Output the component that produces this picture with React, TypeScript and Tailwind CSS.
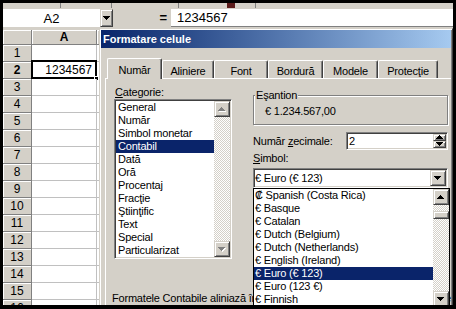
import React from 'react';

const raised =
  'bg-[#d4d0c8] border border-t-[#d4d0c8] border-l-[#d4d0c8] border-r-[#404040] border-b-[#404040] shadow-[inset_1px_1px_0_#fff,inset_-1px_-1px_0_#808080]';
const sunken =
  'bg-white border border-t-[#808080] border-l-[#808080] border-r-white border-b-white shadow-[inset_1px_1px_0_#404040,inset_-1px_-1px_0_#d4d0c8]';
const checker =
  'bg-[image:conic-gradient(#d4d0c8_25%,#fff_0_50%,#d4d0c8_0_75%,#fff_0)] bg-[length:2px_2px]';

const categories = [
  'General',
  'Număr',
  'Simbol monetar',
  'Contabil',
  'Dată',
  'Oră',
  'Procentaj',
  'Fracţie',
  'Ştiinţific',
  'Text',
  'Special',
  'Particularizat',
];

const symbols = [
  '₡ Spanish (Costa Rica)',
  '€ Basque',
  '€ Catalan',
  '€ Dutch (Belgium)',
  '€ Dutch (Netherlands)',
  '€ English (Ireland)',
  '€ Euro (€ 123)',
  '€ Euro (123 €)',
  '€ Finnish',
];

const tabs = [
  { label: 'Număr', w: 'w-[55px]' },
  { label: 'Aliniere', w: 'w-[52px]' },
  { label: 'Font', w: 'w-[54px]' },
  { label: 'Bordură', w: 'w-[55px]' },
  { label: 'Modele', w: 'w-[55px]' },
  { label: 'Protecţie', w: 'w-[60px]' },
];

// pixel triangle like the classic windows scroll arrows
function Arrow({ up = false, disabled = false }: { up?: boolean; disabled?: boolean }) {
  const rows = up ? [3, 2, 1, 0] : [0, 1, 2, 3];
  const tri = (dx: number, dy: number, fill: string) =>
    rows.map((inset, i) => (
      <rect key={fill + i} x={inset + dx} y={i + dy} width={7 - inset * 2} height={1} fill={fill} />
    ));
  return (
    <svg width="8" height="5" viewBox="0 0 8 5" shapeRendering="crispEdges">
      {disabled && tri(1, 1, '#ffffff')}
      {tri(0, 0, disabled ? '#808080' : '#000000')}
    </svg>
  );
}

function Sheet() {
  const rows = Array.from({ length: 16 }, (_, i) => i + 1);
  return (
    <div className="flex flex-col">
      {/* toolbar remnant */}
      <div className="h-[5px] flex">
        <div className="w-[57px]" />
        <div className="w-px bg-[#808080]" />
        <div className="w-[50px]" />
        <div className="w-px bg-[#808080]" />
        <div className="w-[66px]" />
        <div className="w-px bg-[#808080]" />
        <div className="w-[48px]" />
        <div className="w-[8px] bg-[#5a1a1a]" />
        <div className="w-[20px]" />
        <div className="w-px bg-[#808080]" />
      </div>

      {/* formula bar */}
      <div className="h-[22px] flex items-start pt-px">
        <div className="w-[97px] h-[18px] bg-white flex items-center justify-center text-[13px] leading-none">
          A2
        </div>
        <div className={`w-[13px] h-[18px] ${raised} flex items-center justify-center`}>
          <Arrow />
        </div>
        <div className="w-[58px] h-[18px] flex items-center justify-end pr-[4px] text-[13px] font-bold">
          =
        </div>
        <div className="flex-1 h-[18px] bg-white border-b border-[#808080] pl-[6px] flex items-center text-[13px] leading-none">
          1234567
        </div>
      </div>

      {/* column header */}
      <div className="h-[15px] flex">
        <div className="w-[29px] border-r border-b border-[#808080] shadow-[inset_1px_1px_0_#fff]" />
        <div className="w-[65px] border-r border-b border-[#808080] shadow-[inset_1px_1px_0_#fff] flex items-center justify-center text-[12px] font-bold">
          A
        </div>
        <div className="flex-1 border-b border-[#808080] shadow-[inset_1px_1px_0_#fff]" />
      </div>

      {rows.map((r) => (
        <div key={r} className="h-[17px] flex">
          <div
            className={`w-[29px] border-r border-b border-[#808080] shadow-[inset_1px_1px_0_#fff] flex items-center justify-center text-[12px] ${
              r === 2 ? 'font-bold' : ''
            }`}
          >
            {r}
          </div>
          <div className="relative w-[65px] bg-white border-r border-b border-[#c0c0c0] flex items-center justify-end pr-[4px] text-[12px]">
            {r === 2 && (
              <>
                <div className="absolute -left-px -top-[2px] -right-px -bottom-px border-2 border-black" />
                <div className="absolute -right-[3px] -bottom-[3px] w-[5px] h-[5px] bg-black border border-white" />
                1234567
              </>
            )}
          </div>
          <div className="flex-1 bg-white border-b border-[#c0c0c0]" />
        </div>
      ))}
    </div>
  );
}

function ScrollBtn({ up = false, disabled = false }: { up?: boolean; disabled?: boolean }) {
  return (
    <div className={`w-[16px] h-[16px] ${raised} flex items-center justify-center`}>
      <Arrow up={up} disabled={disabled} />
    </div>
  );
}

function Dialog() {
  return (
    <div className="absolute left-[96px] top-[25px] w-[354px] h-[290px] p-px bg-[#d4d0c8] border border-t-[#d4d0c8] border-l-[#d4d0c8] border-r-[#404040] border-b-[#404040] shadow-[inset_1px_1px_0_#fff,inset_-1px_-1px_0_#808080] flex flex-col">
      <div className="h-[18px] bg-gradient-to-r from-[#0a246a] to-[#a6caf0] flex items-center pl-[2px] text-white text-[11px] font-bold">
        Formatare celule
      </div>

      <div className="flex-1 flex flex-col pt-[10px] text-[11px] leading-[13px] tracking-[-0.2px]">
        {/* tabs */}
        <div className="h-[20px] pl-[6px] flex items-end">
          {tabs.map((t, i) =>
            i === 0 ? (
              <div
                key={t.label}
                className={`${t.w} relative z-10 -mb-px h-[21px] bg-[#d4d0c8] border-t border-l border-white border-r border-r-[#404040] rounded-t-[2px] shadow-[inset_-1px_0_0_#808080] flex justify-center pt-[5px]`}
              >
                {t.label}
              </div>
            ) : (
              <div
                key={t.label}
                className={`${t.w} h-[18px] border-t border-l border-white border-r border-r-[#404040] rounded-t-[2px] shadow-[inset_-1px_0_0_#808080] flex justify-center pt-[4px]`}
              >
                {t.label}
              </div>
            )
          )}
        </div>

        {/* panel */}
        <div className="flex-1 ml-[4px] border-t border-l border-white flex flex-col">
          <div className="flex pl-[8px] pt-[6px]">
            {/* categories */}
            <div className="w-[118px] flex flex-col">
              <div className="h-[14px] leading-[14px] pl-px">
                <span className="underline">C</span>ategorie:
              </div>
              <div className={`h-[160px] ${sunken} p-[1px] flex`}>
                <div className="flex-1 flex flex-col">
                  {categories.map((c) => (
                    <div
                      key={c}
                      className={`h-[13px] pl-[2px] ${c === 'Contabil' ? 'bg-[#0a246a] text-white' : ''}`}
                    >
                      {c}
                    </div>
                  ))}
                </div>
                <div className={`w-[16px] flex flex-col ${checker}`}>
                  <ScrollBtn up disabled />
                  <div className="flex-1" />
                  <ScrollBtn disabled />
                </div>
              </div>
            </div>

            {/* right side */}
            <div className="ml-[21px] w-[195px] flex flex-col">
              <div className="relative mt-[10px] h-[30px] border border-[#808080] shadow-[inset_1px_1px_0_#fff,1px_1px_0_#fff] pl-[11px] pt-[9px]">
                <span className="absolute -top-[7px] left-px px-px bg-[#d4d0c8]">Eşantion</span>
                € 1.234.567,00
              </div>

              <div className="mt-[7px] h-[18px] flex items-center">
                <span>
                  Număr <span className="underline">z</span>ecimale:
                </span>
                <div className={`ml-auto w-[102px] h-[18px] ${sunken} flex items-stretch`}>
                  <div className="flex-1 pl-[2px] flex items-center">2</div>
                  <div className="w-[15px] flex flex-col p-px">
                    <div className={`flex-1 ${raised} flex items-center justify-center`}>
                      <Arrow up />
                    </div>
                    <div className={`flex-1 ${raised} flex items-center justify-center`}>
                      <Arrow />
                    </div>
                  </div>
                </div>
              </div>

              <div className="mt-[2px]">
                <span className="underline">S</span>imbol:
              </div>

              <div className="relative mt-[3px]">
                <div className={`h-[20px] ${sunken} flex items-center`}>
                  <div className="flex-1 pl-px">€ Euro (€ 123)</div>
                  <div className="mr-px">
                    <ScrollBtn />
                  </div>
                </div>

                {/* open drop-down list */}
                <div className="absolute z-20 top-full left-0 w-[197px] h-[120px] bg-white border border-black flex">
                  <div className="flex-1 flex flex-col">
                    {symbols.map((s) => (
                      <div
                        key={s}
                        className={`h-[13px] pl-px ${s === '€ Euro (€ 123)' ? 'bg-[#0a246a] text-white' : ''}`}
                      >
                        {s}
                      </div>
                    ))}
                  </div>
                  <div className={`w-[16px] flex flex-col ${checker}`}>
                    <ScrollBtn up />
                    <div className={`mt-[6px] h-[8px] ${raised}`} />
                    <div className="flex-1" />
                    <ScrollBtn />
                  </div>
                </div>
              </div>
            </div>
          </div>

          <div className="mt-[33px] pl-[6px] whitespace-nowrap">
            Formatele Contabile aliniază în coloană simbolurile monetare şi virgulele zecimale.
          </div>
        </div>
      </div>
    </div>
  );
}

export default function App() {
  return (
    <div className="w-[456px] h-[309px] bg-black pt-[3px] pl-[3px] pr-[3px] pb-[4px]">
      <div className="relative w-[450px] h-[302px] overflow-hidden bg-[#d4d0c8] text-black font-['Liberation_Sans',Arial,sans-serif]">
        <Sheet />
        <Dialog />
      </div>
    </div>
  );
}
